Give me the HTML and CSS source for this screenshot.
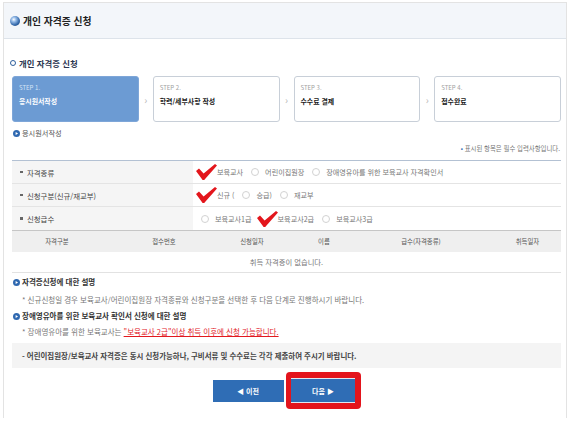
FILE: index.html
```html
<!DOCTYPE html>
<html lang="ko">
<head>
<meta charset="utf-8">
<title>개인 자격증 신청</title>
<link rel="stylesheet" href="styles.css">
</head>
<body>
<div class="page">
  <div class="hd">
    <svg class="hd-ic" viewBox="0 0 10 10" aria-hidden="true">
      <defs>
        <radialGradient id="ball" cx="0.38" cy="0.35" r="0.7">
          <stop offset="0" stop-color="#ffffff"/>
          <stop offset="0.3" stop-color="#9cc0ea"/>
          <stop offset="0.75" stop-color="#3b6fb0"/>
          <stop offset="1" stop-color="#22508c"/>
        </radialGradient>
      </defs>
      <circle cx="5" cy="5" r="5" fill="url(#ball)"/>
    </svg>
    <h1 class="hd-title">개인 자격증 신청</h1>
  </div>

  <div class="ct">
    <h2 class="sec"><span class="ring"></span>개인 자격증 신청</h2>

    <div class="steps">
      <div class="step on"><span class="step-no">STEP 1.</span><span class="step-nm">응시원서작성</span></div>
      <span class="arr">›</span>
      <div class="step"><span class="step-no">STEP 2.</span><span class="step-nm">학력/세부사항 작성</span></div>
      <span class="arr">›</span>
      <div class="step"><span class="step-no">STEP 3.</span><span class="step-nm">수수료 결제</span></div>
      <span class="arr">›</span>
      <div class="step"><span class="step-no">STEP 4.</span><span class="step-nm">접수완료</span></div>
    </div>

    <h3 class="sub"><svg class="play" viewBox="0 0 8 8" aria-hidden="true"><circle cx="4" cy="4" r="4" fill="#2f68b0"/><path d="M3 2.2 L5.8 4 L3 5.8 Z" fill="#fff"/></svg>응시원서작성</h3>

    <p class="req"><span class="dot">•</span> 표시된 항목은 필수 입력사항입니다.</p>

    <div class="form">
      <div class="row">
        <div class="lb"><span class="bl"></span>자격종류</div>
        <div class="val">
          <span class="opt"><svg class="chk" viewBox="0 0 21 16" aria-hidden="true"><polygon points="0,7 3,4.5 7.6,9.6 19,0 21,1.6 8.2,16 6.6,16"/></svg>보육교사</span>
          <span class="opt"><i class="rd"></i>어린이집원장</span>
          <span class="opt"><i class="rd"></i>장애영유아를 위한 보육교사 자격확인서</span>
        </div>
      </div>
      <div class="row">
        <div class="lb"><span class="bl"></span>신청구분(신규/재교부)</div>
        <div class="val">
          <span class="opt"><svg class="chk" viewBox="0 0 21 16" aria-hidden="true"><polygon points="0,7 3,4.5 7.6,9.6 19,0 21,1.6 8.2,16 6.6,16"/></svg>신규 (</span>
          <span class="opt"><i class="rd"></i>승급)</span>
          <span class="opt"><i class="rd"></i>재교부</span>
        </div>
      </div>
      <div class="row last">
        <div class="lb"><span class="bl"></span>신청급수</div>
        <div class="val">
          <span class="opt"><i class="rd"></i>보육교사1급</span>
          <span class="opt"><svg class="chk c2" viewBox="0 0 21 16" aria-hidden="true"><polygon points="0,7 3,4.5 7.6,9.6 19,0 21,1.6 8.2,16 6.6,16"/></svg>보육교사2급</span>
          <span class="opt"><i class="rd"></i>보육교사3급</span>
        </div>
      </div>
    </div>

    <div class="tbl">
      <div class="th">
        <span>자격구분</span><span>접수번호</span><span>신청일자</span><span>이름</span><span>급수(자격종류)</span><span class="l6">취득일자</span>
      </div>
      <div class="empty">취득 자격증이 없습니다.</div>
    </div>

    <h3 class="sub t1"><svg class="play" viewBox="0 0 8 8" aria-hidden="true"><circle cx="4" cy="4" r="4" fill="#2f68b0"/><path d="M3 2.2 L5.8 4 L3 5.8 Z" fill="#fff"/></svg><b>자격증신청에 대한 설명</b></h3>
    <p class="note n1">* 신규신청일 경우 보육교사/어린이집원장 자격종류와 신청구분을 선택한 후 다음 단계로 진행하시기 바랍니다.</p>
    <h3 class="sub t2"><svg class="play" viewBox="0 0 8 8" aria-hidden="true"><circle cx="4" cy="4" r="4" fill="#2f68b0"/><path d="M3 2.2 L5.8 4 L3 5.8 Z" fill="#fff"/></svg><b>장애영유아를 위한 보육교사 확인서 신청에 대한 설명</b></h3>
    <p class="note n2">* 장애영유아를 위한 보육교사는 <span class="red">"보육교사 2급"이상 취득 이후에 신청 가능합니다.</span></p>

    <div class="box">- 어린이집원장/보육교사 자격증은 동시 신청가능하나, 구비서류 및 수수료는 각각 제출하여 주시기 바랍니다.</div>

    <div class="btns">
      <button class="btn prev" type="button">◀ 이전</button>
      <div class="hl"><button class="btn next" type="button">다음 ▶</button></div>
    </div>
  </div>
</div>
</body>
</html>
```

FILE: styles.css
```css
* { box-sizing: border-box; margin: 0; padding: 0; }

body {
  background: #ffffff;
  font-family: "Noto Sans CJK KR", "Noto Sans", sans-serif;
  color: #555;
}

.page {
  margin: 2px 3px 0;
  height: 416px;
  border: 1px solid #e3e3e3;
  border-bottom: 0;
}

.hd {
  height: 36px;
  background: #f3f6fa;
  border-bottom: 1px solid #dde3ea;
  display: flex;
  align-items: center;
  gap: 3px;
  padding-left: 6px;
}

.hd-ic { width: 10px; height: 10px; display: block; }

.hd-title {
  font-size: 9.8px;
  line-height: 12px;
  font-weight: 700;
  color: #222;
}

.ct { padding: 0 5px 0 8px; }

.sec {
  margin: 18px 0 0 -2px;
  height: 12px;
  line-height: 12px;
  font-size: 8.4px;
  font-weight: 700;
  color: #2a3550;
  display: flex;
  align-items: center;
  gap: 3px;
}

.ring {
  width: 6px;
  height: 6px;
  border: 1.6px solid #2d5e9c;
  border-radius: 50%;
  display: block;
}

.steps {
  margin-top: 7px;
  height: 46px;
  display: flex;
}

.step {
  flex: 1;
  border: 1px solid #c8cfd8;
  border-radius: 3px;
  background: #fff;
  padding: 6px 6px 0;
  display: flex;
  flex-direction: column;
  gap: 3px;
}

.step.on { background: #6c9bd3; border-color: #7ea6d8; }

.step-no {
  font-size: 6px;
  line-height: 10px;
  color: #a0a0a0;
}

.step-nm {
  font-size: 6.9px;
  line-height: 10px;
  font-weight: 700;
  color: #1a1a1a;
}

.step.on .step-no { color: #d3e3f6; }
.step.on .step-nm { color: #fff; }

.arr {
  width: 14px;
  flex: none;
  display: flex;
  align-items: center;
  justify-content: center;
  color: #b8b8b8;
  font-size: 10px;
}

.sub {
  margin-top: 5px;
  height: 12px;
  line-height: 12px;
  font-size: 7.2px;
  font-weight: 400;
  color: #555;
  display: flex;
  align-items: center;
  gap: 2px;
  padding-left: 1px;
}

.sub b { font-weight: 700; color: #333; }

.play { width: 7px; height: 7px; display: block; }

.req {
  margin-top: 5px;
  height: 10px;
  line-height: 10px;
  font-size: 6.4px;
  color: #777;
  text-align: right;
  padding-right: 1px;
}

.req .dot { color: #2f68b0; }

.form {
  margin-top: 6px;
  border-top: 1px solid #b3c1d3;
}

.row {
  height: 23px;
  display: flex;
  border-bottom: 1px solid #e4e4e4;
}

.row.last { border-bottom: 0; }

.lb {
  width: 181px;
  flex: none;
  background: #f5f5f5;
  display: flex;
  align-items: center;
  padding-left: 8px;
  font-size: 7.4px;
  color: #444;
}

.bl {
  width: 2.5px;
  height: 2.5px;
  background: #666;
  margin-right: 4.5px;
  display: block;
}

.val {
  flex: 1;
  display: flex;
  align-items: center;
  gap: 3px;
  padding-left: 3px;
  font-size: 7.1px;
  color: #777;
}

.opt {
  display: flex;
  align-items: center;
  white-space: nowrap;
}

.rd {
  width: 8px;
  height: 8px;
  border: 1px solid #d2d2d2;
  border-radius: 50%;
  background: #fff;
  margin: 0 6px 0 5px;
  display: block;
}

.chk {
  width: 21px;
  height: 16px;
  fill: #e3161c;
  display: block;
}

.chk.c2 { margin-left: 2px; }

.tbl { border-bottom: 1px solid #e2e2e2; }

.th {
  height: 22px;
  background: #efefef;
  border-top: 1px solid #c6c6c6;
  display: grid;
  grid-template-columns: 90px 124px 52px 92px 102px 1fr;
  align-items: center;
  font-size: 6.4px;
  color: #555;
}

.th span { text-align: center; }
.th .l6 { padding-left: 22px; }

.empty {
  height: 20px;
  line-height: 20px;
  text-align: center;
  font-size: 7.3px;
  color: #777;
}

.sub.t1 { margin-top: 3px; }
.sub.t2 { margin-top: 4px; }
.sub.t1, .sub.t2 { font-size: 7.5px; }

.note {
  height: 12px;
  line-height: 12px;
  font-size: 7.5px;
  color: #777;
  padding-left: 10px;
}

.note.n1 { margin-top: 6px; }
.note.n2 { margin-top: 4px; }

.red { color: #e2191f; text-decoration: underline; }

.box {
  margin-top: 5px;
  height: 25px;
  line-height: 25px;
  background: #f4f4f4;
  padding-left: 10px;
  font-size: 7.45px;
  font-weight: 700;
  color: #444;
}

.btns {
  margin-top: 4px;
  display: flex;
  justify-content: center;
  align-items: center;
  gap: 2px;
}

.btn {
  border: 0;
  background: #2f6db5;
  color: #fff;
  font-family: "Noto Sans CJK KR", "Noto Sans", sans-serif;
  font-size: 7px;
  font-weight: 700;
  display: block;
}

.btn.prev { width: 71px; height: 22px; }

.hl {
  width: 75px;
  height: 37px;
  background: #e3141c;
  border-radius: 4px;
  display: flex;
  align-items: center;
  justify-content: center;
}

.btn.next {
  width: 64px;
  height: 25px;
  border-top: 1px solid #dfe8f3;
  border-bottom: 1px solid #dfe8f3;
}
```
